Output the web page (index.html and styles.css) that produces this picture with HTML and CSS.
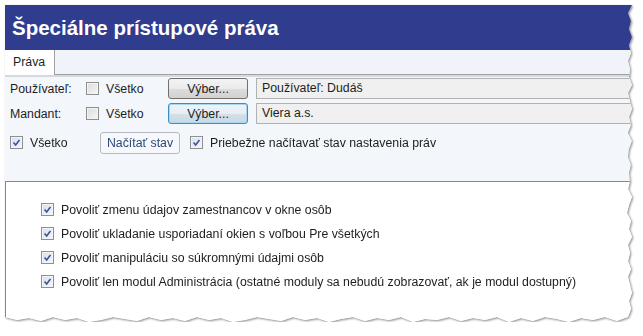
FILE: index.html
```html
<!DOCTYPE html>
<html lang="sk">
<head>
    <meta charset="UTF-8">
    <title>Špeciálne prístupové práva</title>
    <link rel="stylesheet" href="styles.css">
</head>
<body>
    <div class="sheet">
    <div class="window">
        <div class="title">Špeciálne prístupové práva</div>

        <div class="tabs">
            <div class="tab">Práva</div>
        </div>

        <div class="filters">
            <div class="row">
                <span class="label">Používateľ:</span>
                <span class="check"><span class="box"></span>Všetko</span>
                <button class="btn">Výber...</button>
                <div class="field">Používateľ: Dudáš</div>
            </div>
            <div class="row">
                <span class="label">Mandant:</span>
                <span class="check"><span class="box"></span>Všetko</span>
                <button class="btn focus">Výber...</button>
                <div class="field">Viera a.s.</div>
            </div>
            <div class="row row-opts">
                <span class="check all"><span class="box on"><svg viewBox="0 0 13 13"><path d="M3 6.5 L5.5 9.5 L10 3.5" /></svg></span>Všetko</span>
                <button class="btn flat">Načítať stav</button>
                <span class="check"><span class="box on"><svg viewBox="0 0 13 13"><path d="M3 6.5 L5.5 9.5 L10 3.5" /></svg></span>Priebežne načítavať stav nastavenia práv</span>
            </div>
        </div>

        <div class="panel">
            <span class="check"><span class="box on"><svg viewBox="0 0 13 13"><path d="M3 6.5 L5.5 9.5 L10 3.5" /></svg></span>Povoliť zmenu údajov zamestnancov v okne osôb</span>
            <span class="check"><span class="box on"><svg viewBox="0 0 13 13"><path d="M3 6.5 L5.5 9.5 L10 3.5" /></svg></span>Povoliť ukladanie usporiadaní okien s voľbou Pre všetkých</span>
            <span class="check"><span class="box on"><svg viewBox="0 0 13 13"><path d="M3 6.5 L5.5 9.5 L10 3.5" /></svg></span>Povoliť manipuláciu so súkromnými údajmi osôb</span>
            <span class="check"><span class="box on"><svg viewBox="0 0 13 13"><path d="M3 6.5 L5.5 9.5 L10 3.5" /></svg></span>Povoliť len modul Administrácia (ostatné moduly sa nebudú zobrazovať, ak je modul dostupný)</span>
        </div>
    </div>
    </div>
</body>
</html>
```

FILE: styles.css
```css
body {
    margin: 0;
    background-color: #fff;
    font-family: 'Liberation Sans', Arial, sans-serif;
    font-size: 12.3px;
    color: #1e1e1e;
}

/* torn paper edge: shadow on the wrapper, jagged clip on the window */
.sheet {
    margin: 5px 0 0 5px;
    width: 627px;
    filter: drop-shadow(1px 1px 1px rgba(0, 0, 0, 0.45));
}

.window {
    height: 317px;
    background-color: #f3f6fb;
    display: flex;
    flex-direction: column;
    clip-path: polygon(0 0, 627px 0,
        623px 8px, 626px 16px, 624px 24px, 627px 32px, 624px 40px, 626px 48px, 623px 56px, 625px 64px,
        624px 72px, 627px 80px, 623px 88px, 625px 96px, 627px 104px, 624px 112px, 626px 120px, 623px 128px,
        627px 136px, 624px 144px, 623px 152px, 626px 160px, 624px 168px, 625px 176px, 623px 184px, 627px 192px,
        624px 200px, 622px 208px, 626px 216px, 624px 224px, 627px 232px, 623px 240px, 625px 248px, 623px 256px,
        626px 264px, 623px 272px, 625px 280px, 627px 288px, 624px 296px, 626px 304px, 623px 312px,
        620px 313px, 612px 316px, 600px 312px, 588px 315px, 576px 313px, 564px 317px, 552px 314px, 540px 312px,
        528px 316px, 516px 313px, 504px 317px, 492px 312px, 480px 315px, 468px 313px, 456px 316px, 444px 312px,
        432px 315px, 420px 314px, 408px 317px, 396px 312px, 384px 315px, 372px 313px, 360px 316px, 348px 312px,
        336px 314px, 324px 317px, 312px 313px, 300px 315px, 288px 312px, 276px 316px, 264px 314px, 252px 312px,
        240px 315px, 228px 317px, 216px 313px, 204px 315px, 192px 312px, 180px 316px, 168px 313px, 156px 315px,
        144px 312px, 132px 316px, 120px 314px, 108px 312px, 96px 315px, 84px 317px, 72px 313px, 60px 315px,
        48px 312px, 36px 316px, 24px 313px, 12px 315px, 0 312px);
}

.title {
    height: 45px;
    background-color: #303c8d;
    color: #fff;
    font-size: 20.5px;
    font-weight: bold;
    padding-left: 7px;
    line-height: 46px;
}

.tabs {
    height: 24px;
    display: flex;
    background-color: #f0f4fa;
    border-bottom: 1px solid #a0a0a0;
    box-shadow: 0 2px 0 #d6d9de;
}

.tab {
    width: 41px;
    padding-left: 8px;
    background-color: #fff;
    border-right: 1px solid #a0a0a0;
    line-height: 24px;
    margin-bottom: -1px;
}

.filters {
    padding: 3px 0 0 5px;
    height: 103px;
}

.row {
    display: flex;
    align-items: center;
    height: 21px;
    margin-bottom: 4px;
}

.label {
    width: 76px;
}

.check {
    display: flex;
    align-items: center;
    gap: 7px;
}

.row .check {
    width: 82px;
}

.row-opts {
    margin-top: 8px;
}

.row-opts .check.all {
    width: 90px;
}

.row-opts .btn + .check {
    width: auto;
    margin-left: 10px;
}

.box {
    width: 11px;
    height: 11px;
    border: 1px solid #8e8f8f;
    background: linear-gradient(135deg, #dcdcdc, #f6f6f6);
    box-shadow: inset 0 0 0 1px #f4f4f4;
    display: inline-flex;
}

.box.on {
    background: linear-gradient(135deg, #d8e0ee, #f4f6fb);
}

.box svg {
    width: 11px;
    height: 11px;
}

.box path {
    fill: none;
    stroke: #3c4fa0;
    stroke-width: 1.8;
}

.btn {
    width: 80px;
    height: 21px;
    font-family: inherit;
    font-size: 12.3px;
    color: #1e1e1e;
    border: 1px solid #707070;
    border-radius: 3px;
    background: linear-gradient(#f3f3f3, #ebebeb 50%, #dcdcdc 51%, #d2d2d2);
    padding: 0;
}

.btn.focus {
    border-color: #3c8fc6;
    background: linear-gradient(#eef4f8, #e6eef3 50%, #d4e1ea 51%, #c9d8e3);
    box-shadow: inset 0 0 0 1px #a9d7f2;
}

.btn.flat {
    background: #f6f8fb;
    border-color: #b4b9c2;
    color: #2c4a78;
    height: 22px;
}

.field {
    flex: 1;
    margin-left: 8px;
    height: 19px;
    border: 1px solid #b1b1b1;
    border-right: 0;
    background-color: #f0f0f0;
    line-height: 19px;
    padding-left: 5px;
}

.panel {
    flex: 1;
    background-color: #fff;
    border-top: 1px solid #828790;
    border-left: 1px solid #828790;
    padding: 20px 0 0 35px;
    display: flex;
    flex-direction: column;
    gap: 9px;
}

.panel .check {
    height: 15px;
    gap: 7px;
}
```
